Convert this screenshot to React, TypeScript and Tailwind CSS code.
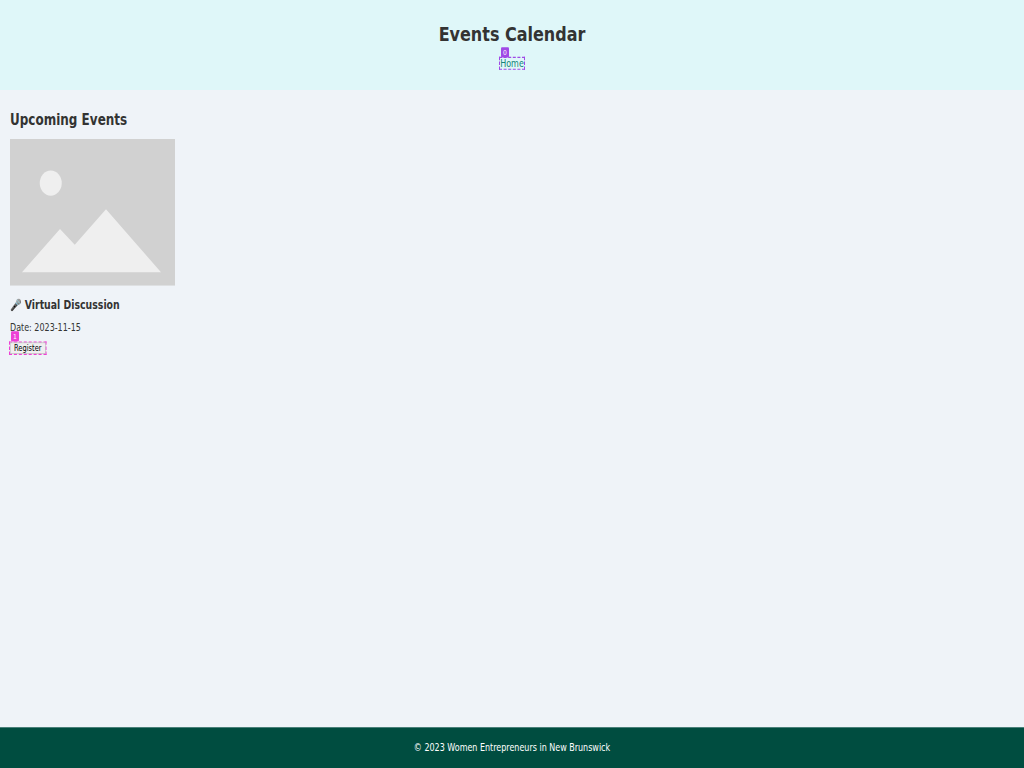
import React from "react";

export default function App() {
  return (
    <div className="h-screen w-full overflow-hidden bg-[#eff3f8]">
      <div className="flex h-[1366px] w-[2048px] origin-top-left scale-x-[0.5] scale-y-[0.5625] flex-col bg-[#eff3f8] font-['DejaVu_Sans',sans-serif] text-base whitespace-nowrap text-[#333]">
        <header className="flex h-[160px] flex-col items-center bg-[#dff7f9] pt-[43px]">
          <h1 className="scale-y-[1.06] text-[32px] leading-[37px] font-bold">Events Calendar</h1>
          <nav className="mt-[21px] flex">
            <a href="#" className="relative flex h-[23px] w-[52px] items-center justify-center border-2 border-dashed border-[#a04ae6] leading-[19px] text-[#138578]">
              <span className="scale-y-[1.15]">Home</span>
              <span className="absolute -top-[19px] left-[2px] flex h-[18px] w-4 items-center justify-center rounded-[2px] bg-[#a04ae6] text-[12px] leading-none text-white">0</span>
            </a>
          </nav>
        </header>
        <main className="flex flex-1 flex-col items-start pl-[20px]">
          <h2 className="mt-[39px] scale-y-[1.12] text-[24px] leading-7 font-bold">Upcoming Events</h2>
          <svg className="mt-[20px] h-[261px] w-[330px]" viewBox="0 0 330 261">
            <rect width="330" height="261" fill="#d1d1d1" />
            <ellipse cx="81.5" cy="78.5" rx="22" ry="22.3" fill="#efefef" />
            <path d="M24 237 100 160 129.5 188 192 125 302 237Z" fill="#efefef" />
          </svg>
          <h3 className="mt-[24px] scale-y-[1.1] text-[18.72px] leading-[22px] font-bold">🎤 Virtual Discussion</h3>
          <p className="mt-[18px] scale-y-[1.15] leading-[19px]">Date: 2023-11-15</p>
          <button className="relative mt-[16px] -ml-[2px] flex h-[24px] w-[75px] items-center justify-center border-2 border-dashed border-[#ed40d5] bg-[#efefef] text-[13.333px] leading-none text-black">
            <span className="flex h-full w-full items-center justify-center border border-[#b5b5b5]"><span className="scale-y-[1.15]">Register</span></span>
            <span className="absolute -top-[20px] left-[2px] flex h-[18px] w-4 items-center justify-center rounded-[2px] bg-[#ed40d5] text-[12px] text-white">1</span>
          </button>
        </main>
        <footer className="flex h-[73px] items-center justify-center bg-[#004d40] text-white">
          <span className="scale-y-[1.15]">© 2023 Women Entrepreneurs in New Brunswick</span>
        </footer>
      </div>
    </div>
  );
}
